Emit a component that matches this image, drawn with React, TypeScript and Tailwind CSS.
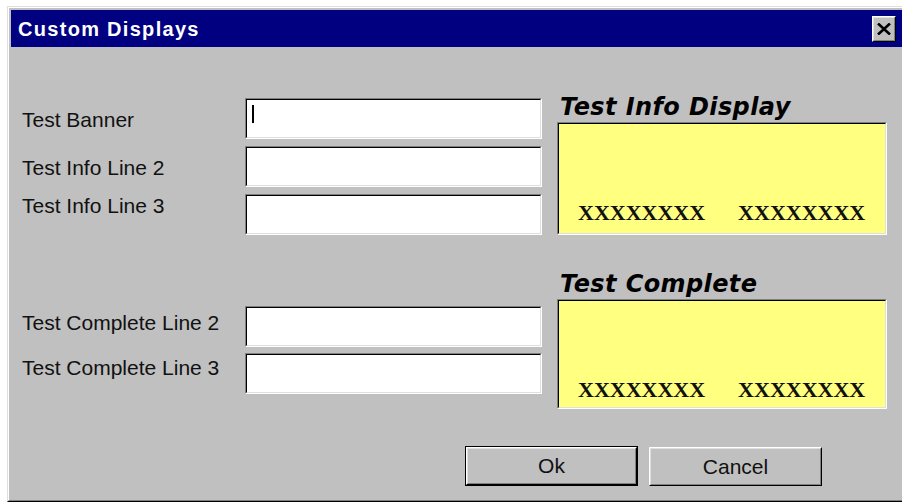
import React from "react";

const sans = "font-['Liberation_Sans',Arial,sans-serif]";

// Sunken 3D edge used by the edit boxes and the preview panels
function Sunken({ className = "", children }: { className?: string; children?: React.ReactNode }) {
	return (
		<div className={`border border-t-[#808080] border-l-[#808080] border-r-white border-b-white ${className}`}>
			<div className="h-full w-full border border-t-black border-l-black border-r-[#dfdfdf] border-b-[#dfdfdf]">
				{children}
			</div>
		</div>
	);
}

function TextBox({ caret = false }: { caret?: boolean }) {
	return (
		<Sunken className="h-[41px] w-[297px] shrink-0">
			<div className="h-full w-full bg-white pl-[5px] pt-[5px]">
				{caret && <div className="h-[18px] w-[2px] bg-black" />}
			</div>
		</Sunken>
	);
}

function Field({ label, offset, caret }: { label: string; offset: string; caret?: boolean }) {
	return (
		<div className="flex items-start">
			<div className={`w-[223px] shrink-0 text-[21px] leading-[24px] text-[#111] ${sans} ${offset}`}>{label}</div>
			<TextBox caret={caret} />
		</div>
	);
}

function Preview({ title, height }: { title: string; height: string }) {
	return (
		<div className="flex flex-col">
			<div className="pl-[3px] font-['DejaVu_Sans',sans-serif] text-[24px] font-bold italic leading-[28px] tracking-[0.4px] text-black">
				{title}
			</div>
			<Sunken className={`mt-[1px] w-[330px] ${height}`}>
				<div className="flex h-full w-full gap-[33px] bg-[#ffff80] pl-[19px] pt-[77px] font-['Liberation_Serif',serif] text-[22px] font-bold leading-[24px] text-[#111]">
					<span>XXXXXXXX</span>
					<span>XXXXXXXX</span>
				</div>
			</Sunken>
		</div>
	);
}

function Button({ label, isDefault = false }: { label: string; isDefault?: boolean }) {
	const face = (
		<div className="h-full w-full border border-t-white border-l-white border-r-black border-b-black">
			<div className={`flex h-full w-full items-center justify-center border border-t-[#dfdfdf] border-l-[#dfdfdf] border-r-[#808080] border-b-[#808080] bg-[#c0c0c0] text-[21px] text-[#111] ${sans}`}>
				{label}
			</div>
		</div>
	);
	return isDefault ? (
		<div className="h-[40px] w-[173px] border border-black">{face}</div>
	) : (
		<div className="mt-[1px] h-[39px] w-[173px]">{face}</div>
	);
}

export default function App() {
	return (
		<div className="h-[502px] w-[902px] overflow-hidden bg-white pl-[7px] pt-[6px]">
			<div className="h-[496px] w-[900px] border border-t-[#dfdfdf] border-l-[#dfdfdf] border-r-black border-b-black">
				<div className="flex h-full w-full flex-col border border-t-white border-l-white border-r-[#808080] border-b-[#808080] bg-[#c0c0c0] p-[2px]">
					{/* title bar */}
					<div className="flex h-[37px] shrink-0 items-center justify-between bg-[#000080] pl-[7px] pr-[7px]">
						<span className={`text-[20px] font-bold leading-[24px] tracking-[1.3px] text-white ${sans}`}>Custom Displays</span>
						<div className="h-[26px] w-[24px] border border-t-white border-l-white border-r-black border-b-black">
							<div className="flex h-full w-full items-center justify-center border border-t-[#dfdfdf] border-l-[#dfdfdf] border-r-[#808080] border-b-[#808080] bg-[#c0c0c0]">
								<svg width="14" height="12" viewBox="0 0 14 12">
									<path d="M1 0.5 L13 11.5 M13 0.5 L1 11.5" stroke="#000" strokeWidth="2.6" />
								</svg>
							</div>
						</div>
					</div>

					<div className="flex flex-col pl-[11px] pt-[46px]">
						<div className="flex gap-[15px]">
							<div className="flex flex-col pt-[5px]">
								<div className="flex flex-col gap-[7px]">
									<Field label="Test Banner" offset="pt-[10px]" caret />
									<Field label="Test Info Line 2" offset="pt-[10px]" />
									<Field label="Test Info Line 3" offset="mt-0" />
								</div>
								<div className="mt-[71px] flex flex-col gap-[6px]">
									<Field label="Test Complete Line 2" offset="pt-[5px]" />
									<Field label="Test Complete Line 3" offset="pt-[3px]" />
								</div>
							</div>
							<div className="flex flex-col gap-[35px]">
								<Preview title="Test Info Display" height="h-[113px]" />
								<Preview title="Test Complete" height="h-[110px]" />
							</div>
						</div>

						<div className="mt-[37px] flex gap-[11px] pl-[443px]">
							<Button label="Ok" isDefault />
							<Button label="Cancel" />
						</div>
					</div>
				</div>
			</div>
		</div>
	);
}
